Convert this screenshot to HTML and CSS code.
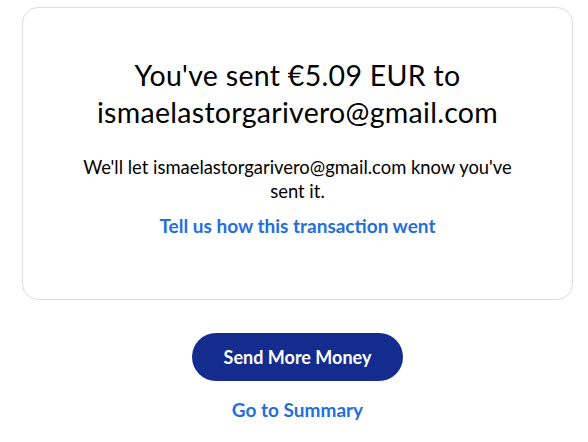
FILE: index.html
```html
<!DOCTYPE html>
<html lang="en">
<head>
<meta charset="utf-8">
<link rel="stylesheet" href="styles.css">
</head>
<body>
<main class="page">
  <section class="card">
    <h1 class="title">You've sent €5.09 EUR to<br>ismaelastorgarivero@gmail.com</h1>
    <p class="note">We'll let ismaelastorgarivero@gmail.com know you've sent it.</p>
    <a class="link" href="#">Tell us how this transaction went</a>
  </section>
  <div class="actions">
    <button class="btn" type="button">Send More Money</button>
    <a class="link summary" href="#">Go to Summary</a>
  </div>
</main>
</body>
</html>
```
FILE: styles.css
```css
html, body {
  margin: 0;
  padding: 0;
  background: #fff;
}
body {
  font-family: "Lato", "Open Sans", sans-serif;
  color: #000;
}
.page {
  padding: 7px 15px 0 22px;
}
.card {
  border: 1px solid #dcdcdc;
  border-radius: 16px;
  height: 293px;
  box-sizing: border-box;
  padding: 49px 40px 0;
  display: flex;
  flex-direction: column;
  align-items: center;
  text-align: center;
}
.title {
  margin: 0;
  font-size: 28.5px;
  font-weight: 400;
  line-height: 37px;
  letter-spacing: 0.3px;
}
.note {
  margin: 24px 0 0;
  width: 440px;
  font-size: 18.4px;
  line-height: 24px;
}
.link {
  color: #1f6fdc;
  font-weight: 700;
  font-size: 19px;
  line-height: 24px;
  text-decoration: none;
  margin-top: 11px;
}
.actions {
  display: flex;
  flex-direction: column;
  align-items: center;
  padding-top: 33px;
}
.btn {
  width: 211px;
  height: 48px;
  border: 0;
  border-radius: 24px;
  background: #142c8e;
  color: #fff;
  font-family: inherit;
  font-weight: 700;
  font-size: 18px;
}
.summary {
  margin-top: 17px;
}
```
